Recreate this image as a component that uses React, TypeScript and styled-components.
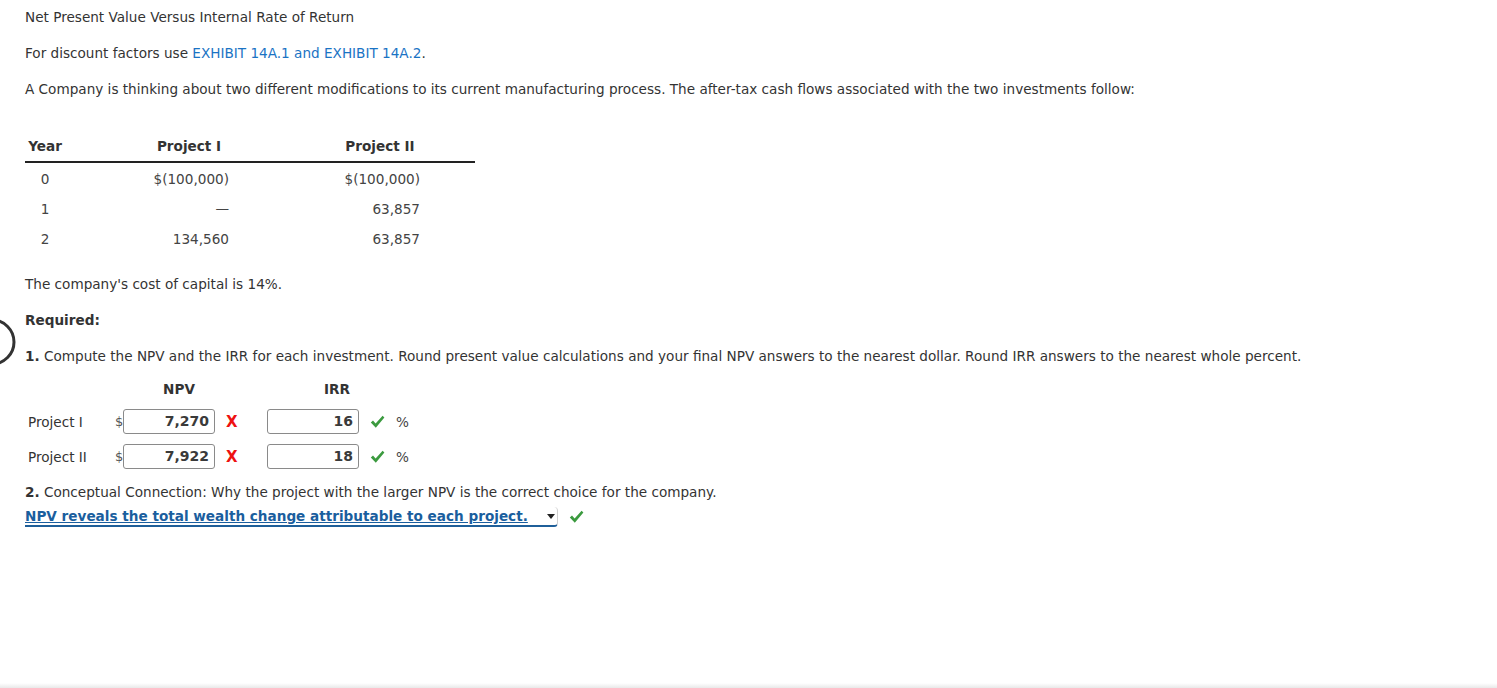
import React from "react"
import styled, { createGlobalStyle } from "styled-components"

const GlobalStyle = createGlobalStyle`
  html, body {
    margin: 0;
    padding: 0;
    background: #fff;
  }
  body {
    font-family: "DejaVu Sans", Verdana, sans-serif;
    font-size: 13.6px;
    color: #333;
  }
`

const Page = styled.div`
  position: relative;
  min-height: 688px;
  display: flex;
  flex-direction: column;
  box-sizing: border-box;
`

const Content = styled.div`
  flex: 1;
  padding: 7px 25px 0;
`

const BottomShade = styled.div`
  height: 5px;
  background: linear-gradient(#fff, #e9e9e9);
`

const Para = styled.p<{ $mt?: number }>`
  margin: ${(p) => p.$mt ?? 0}px 0 0;
  line-height: 20px;
  white-space: nowrap;
`

const Link = styled.a`
  color: #1a73c4;
  text-decoration: none;
`

const Bold = styled.span`
  font-weight: bold;
`

const FlowTable = styled.div`
  width: 450px;
  margin-top: 32px;
`

const TRow = styled.div<{ $head?: boolean }>`
  display: grid;
  grid-template-columns: 40px 248px 134px 1fr;
  height: 30px;
  align-items: center;
  font-weight: ${(p) => (p.$head ? "bold" : "normal")};
  border-bottom: ${(p) => (p.$head ? "2px solid #222" : "none")};
  margin-bottom: ${(p) => (p.$head ? 1 : 0)}px;
  color: ${(p) => (p.$head ? "#333" : "#444")};
`

const Cell = styled.div<{ $right?: number }>`
  text-align: ${(p) => (p.$right != null ? "right" : "center")};
  padding-right: ${(p) => p.$right ?? 0}px;
`

const AnswerHead = styled.div`
  display: flex;
  font-weight: bold;
  margin-top: 13px;
  line-height: 20px;
`

const HeadCell = styled.div<{ $w: number; $ml: number }>`
  width: ${(p) => p.$w}px;
  margin-left: ${(p) => p.$ml}px;
  text-align: center;
`

const AnswerList = styled.div`
  margin-top: 5px;
`

const AnswerRow = styled.div`
  display: flex;
  align-items: center;
  height: 35px;
`

const RowLabel = styled.div`
  width: 90px;
  padding-left: 3px;
  box-sizing: border-box;
`

const Dollar = styled.span`
  width: 8px;
  font-size: 13px;
  color: #555;
`

const Box = styled.div<{ $w: number }>`
  width: ${(p) => p.$w}px;
  height: 25px;
  box-sizing: border-box;
  border: 1px solid #8a8a8a;
  border-radius: 3px;
  text-align: right;
  padding: 0 5px;
  line-height: 23px;
  font-weight: bold;
  color: #3a3a3a;
  font-size: 14px;
`

const Cross = styled.span`
  color: #ee1111;
  font-weight: bold;
  font-size: 15px;
  margin-left: 11px;
  width: 41px;
`

const Percent = styled.span`
  margin-left: 11px;
  color: #444;
`

const SelectLine = styled.div`
  display: flex;
  align-items: center;
  margin-top: 5px;
`

const FakeSelect = styled.div`
  width: 533px;
  height: 20px;
  box-sizing: border-box;
  display: flex;
  align-items: center;
  justify-content: space-between;
  border: 1px solid #d0d0d0;
  border-left: none;
  border-top: none;
  border-radius: 0 4px 4px 0;
  border-bottom: 2px solid #1f5f99;
  color: #1a5e9e;
  font-weight: bold;
  line-height: 18px;
`

const SelectText = styled.span`
  text-decoration: underline;
  white-space: nowrap;
`

const Arrow = styled.span`
  width: 0;
  height: 0;
  border-left: 4px solid transparent;
  border-right: 4px solid transparent;
  border-top: 5px solid #222;
  margin-right: 2px;
`

const Ring = styled.svg`
  position: absolute;
  left: 0;
  top: 314px;
`

const CheckSvg = styled.svg`
  margin-left: 11px;
  flex: none;
`

const Check = () => (
  <CheckSvg width="15" height="14" viewBox="0 0 15 14">
    <path d="M0.8 7.6 L3 5.6 L5.6 8.4 L12.6 0.8 L14.4 2.4 L5.8 12.8 Z" fill="#3b9a3f" />
  </CheckSvg>
)

const rows = [
  { y: "0", a: "$(100,000)", b: "$(100,000)" },
  { y: "1", a: "—", b: "63,857" },
  { y: "2", a: "134,560", b: "63,857" },
]

const answers = [
  { label: "Project I", npv: "7,270", irr: "16" },
  { label: "Project II", npv: "7,922", irr: "18" },
]

export default function App() {
  return (
    <Page>
      <GlobalStyle />
      <Ring width="20" height="56" viewBox="0 0 20 56">
        <circle cx="-8" cy="28" r="22" fill="none" stroke="#333" strokeWidth="3" />
      </Ring>
      <Content>
        <Para>Net Present Value Versus Internal Rate of Return</Para>
        <Para $mt={16}>
          For discount factors use <Link href="#">EXHIBIT 14A.1 and EXHIBIT 14A.2</Link>.
        </Para>
        <Para $mt={16}>
          A Company is thinking about two different modifications to its current manufacturing process. The after-tax cash flows associated with the two investments follow:
        </Para>

        <FlowTable>
          <TRow $head>
            <Cell>Year</Cell>
            <Cell>Project I</Cell>
            <Cell>Project II</Cell>
            <div />
          </TRow>
          {rows.map((r) => (
            <TRow key={r.y}>
              <Cell>{r.y}</Cell>
              <Cell $right={84}>{r.a}</Cell>
              <Cell $right={27}>{r.b}</Cell>
              <div />
            </TRow>
          ))}
        </FlowTable>

        <Para $mt={20}>The company's cost of capital is 14%.</Para>
        <Para $mt={16}>
          <Bold>Required:</Bold>
        </Para>
        <Para $mt={16}>
          <Bold>1.</Bold> Compute the NPV and the IRR for each investment. Round present value calculations and your final NPV answers to the nearest dollar. Round IRR answers to the nearest whole percent.
        </Para>

        <AnswerHead>
          <HeadCell $w={128} $ml={90}>NPV</HeadCell>
          <HeadCell $w={140} $ml={24}>IRR</HeadCell>
        </AnswerHead>
        <AnswerList>
          {answers.map((a) => (
            <AnswerRow key={a.label}>
              <RowLabel>{a.label}</RowLabel>
              <Dollar>$</Dollar>
              <Box $w={92}>{a.npv}</Box>
              <Cross>X</Cross>
              <Box $w={92}>{a.irr}</Box>
              <Check />
              <Percent>%</Percent>
            </AnswerRow>
          ))}
        </AnswerList>

        <Para $mt={8}>
          <Bold>2.</Bold> Conceptual Connection: Why the project with the larger NPV is the correct choice for the company.
        </Para>
        <SelectLine>
          <FakeSelect>
            <SelectText>NPV reveals the total wealth change attributable to each project.</SelectText>
            <Arrow />
          </FakeSelect>
          <Check />
        </SelectLine>
      </Content>
      <BottomShade />
    </Page>
  )
}
